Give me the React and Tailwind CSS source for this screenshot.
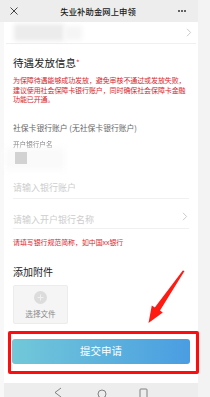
import React from 'react';

function Chevron() {
  return (
    <svg width="6" height="9" viewBox="0 0 6 9" fill="none" stroke="#c4c4c4" strokeWidth="0.9">
      <path d="M1 0.8 L4.6 4.5 L1 8.2" />
    </svg>
  );
}

function TopBar() {
  return (
    <div className="h-[22px] bg-[#ededed] flex items-center justify-between px-[10px]">
      <svg width="8" height="8" viewBox="0 0 8 8" stroke="#333" strokeWidth="0.9">
        <path d="M0.5 0.5 L7.5 7.5 M7.5 0.5 L0.5 7.5" />
      </svg>
      <div className="text-[8.3px] font-medium text-[#1a1a1a] tracking-[0.1px]">失业补助金网上申领</div>
      <div className="flex gap-[1.5px] pr-[2px]">
        <span className="w-[1.6px] h-[1.6px] rounded-full bg-[#333]" />
        <span className="w-[1.6px] h-[1.6px] rounded-full bg-[#333]" />
        <span className="w-[1.6px] h-[1.6px] rounded-full bg-[#333]" />
      </div>
    </div>
  );
}

function Arrow() {
  return (
    <svg className="absolute left-0 top-0 pointer-events-none" width="210" height="397" viewBox="0 0 210 397">
      <polygon
        fill="#ff1a12"
        points="184.5,271 160,310.4 162.8,312.6 148.5,323 151.8,305.4 154.8,307.6 182.8,270.4"
      />
    </svg>
  );
}

export default function App() {
  return (
    <div className="relative w-[210px] h-[397px] overflow-hidden bg-[#f3f3f3] flex font-['Noto_Sans_CJK_SC','Noto_Sans',sans-serif]">
      <div className="w-[198px] flex flex-col">
        <TopBar />
        <div className="flex-1 flex">
          <div className="w-[4px] bg-[#f8f8f8]" />
          <div className="flex-1 bg-white flex flex-col">
            {/* blurred header row */}
            <div className="h-[22px] mx-[2px] border-b border-[#f0f0f0] flex items-center justify-between pr-[4px]">
              <div className="flex items-center">
                <div className="w-[50px] h-[17px] ml-[8px] bg-[#ececec] blur-[2px]" />
                <div className="w-[18px] h-[14px] bg-[#f5f5f5] blur-[2px]" />
              </div>
              <Chevron />
            </div>

            <div className="px-[9px]">
              <div className="mt-[12px] text-[10.5px] leading-[14px] text-[#222]">
                待遇发放信息<span className="text-[#e4393c] text-[8px] align-top">*</span>
              </div>
              <p className="mt-[6px] text-[7px] leading-[9.5px] text-[#d8262c] tracking-[-0.1px]">
                为保障待遇能够成功发放，避免审核不通过或发放失败，建议使用社会保障卡银行账户，同时确保社会保障卡金融功能已开通。
              </p>

              <div className="mt-[17px] text-[7.8px] leading-[11px] text-[#666]">
                社保卡银行账户 (无社保卡银行账户)
              </div>
              <div className="mt-[7px] text-[6.6px] leading-[9px] text-[#777] blur-[0.4px]">开户银行户名</div>
              <div className="relative mt-[3.5px] h-[12px]">
                <div className="absolute -left-[8px] -top-[4px] w-[60px] h-[22px] bg-[#fafafa] blur-[3px]" />
                <div className="relative ml-[2px] w-[12px] h-[12px] bg-[#d2d2d2]" />
              </div>

              <div className="mt-[18px] pb-[4px] border-b border-[#f0f0f0] text-[9px] leading-[12px] text-[#cdcdcd]">
                请输入银行账户
              </div>
              <div className="mt-[15px] pb-[2px] border-b border-[#f0f0f0] flex items-center justify-between text-[9px] leading-[12px] text-[#cdcdcd]">
                <span>请输入开户银行名称</span>
                <span className="pr-[1px] -mt-[8px]"><Chevron /></span>
              </div>
              <div className="mt-[8px] text-[6.9px] leading-[10px] text-[#d8262c]">
                请填写银行规范简称，如中国xx银行
              </div>

              <div className="mt-[18px] text-[10px] leading-[13px] text-[#222]">添加附件</div>
              <div className="mt-[6.5px] w-[55px] h-[39px] bg-[#f5f5f5] border border-[#ececec] rounded-[2px] flex flex-col items-center pt-[5px]">
                <div className="w-[13px] h-[13px] rounded-full bg-[#dcdcdc] flex items-center justify-center">
                  <svg width="7" height="7" viewBox="0 0 7 7" stroke="#f0f0f0" strokeWidth="1">
                    <path d="M3.5 0.5 V6.5 M0.5 3.5 H6.5" />
                  </svg>
                </div>
                <div className="mt-[5px] text-[7.6px] leading-[10px] text-[#8a8a8a]">选择文件</div>
              </div>
            </div>

            <div className="mt-[7px] ml-[4px] -mr-[1px] border-[3px] border-[#ff0d0d] rounded-[2px] pt-[5px] pb-[7px] pl-[1px] pr-[6px]">
              <div className="h-[25px] rounded-[3px] bg-gradient-to-r from-[#72c8d8] to-[#4a9de1] flex items-center justify-center text-white text-[10.5px]">
                提交申请
              </div>
            </div>

            <div className="mt-[9px] flex-1 bg-[#ededed] flex items-start pt-[2px]">
              <svg width="194" height="12" viewBox="0 0 194 12" fill="none" stroke="#666" strokeWidth="0.8">
                <path d="M57 3 L51 7.5 L57 12" />
                <circle cx="98" cy="9" r="4" />
                <rect x="136" y="4" width="7" height="9" rx="0.8" />
              </svg>
            </div>
          </div>
        </div>
      </div>
      <div className="flex-1" />
      <Arrow />
    </div>
  );
}
